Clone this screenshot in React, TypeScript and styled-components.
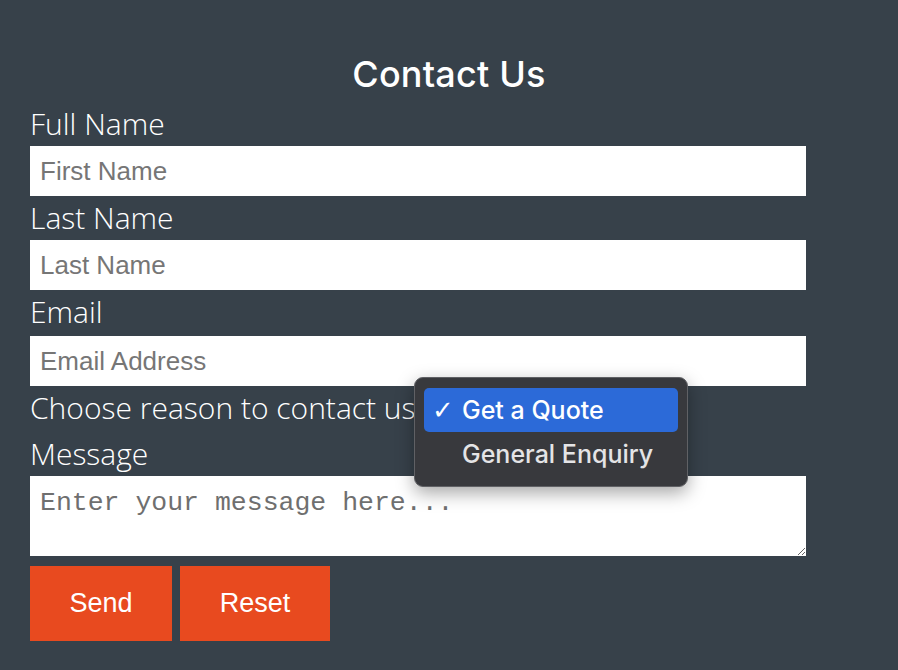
import React from 'react';
import styled, { createGlobalStyle } from 'styled-components';

const GlobalStyle = createGlobalStyle`
  html, body {
    margin: 0;
    padding: 0;
    background: #37414a;
  }
  body {
    width: 898px;
    height: 670px;
    overflow: hidden;
  }
`

const Page = styled.div`
  width: 898px;
  height: 670px;
  box-sizing: border-box;
  padding: 52px 30px 0 30px;
  background: #37414a;
`
const Title = styled.h1`
  margin: 0 0 6px -30px;
  width: 898px;
  text-align: center;
  font-family: Inter, "Noto Sans", sans-serif;
  font-weight: 500;
  font-size: 36px;
  line-height: 44px;
  color: #ffffff;
  letter-spacing: 0.2px;
`
const Form = styled.form`
  width: 776px;
  display: flex;
  flex-direction: column;
`
const Label = styled.label<{ h?: number }>`
  display: block;
  font-family: "Open Sans", sans-serif;
  font-weight: 300;
  font-size: 30px;
  line-height: 44px;
  height: ${(p) => p.h || 44}px;
  color: #ffffff;
  white-space: nowrap;
`
const Field = styled.input`
  display: block;
  width: 100%;
  height: 50px;
  box-sizing: border-box;
  border: none;
  outline: none;
  margin: 0;
  padding: 0 10px;
  background: #ffffff;
  font-family: "Liberation Sans", Arial, sans-serif;
  font-size: 26px;
  color: #222;
  &::placeholder {
    color: #767676;
  }
`
const ReasonRow = styled.div`
  position: relative;
  height: 46px;
`
const Message = styled.textarea`
  display: block;
  width: 100%;
  height: 80px;
  box-sizing: border-box;
  border: none;
  outline: none;
  margin: 0;
  padding: 12px 10px;
  resize: vertical;
  background: #ffffff;
  font-family: "Liberation Mono", "Courier New", monospace;
  font-size: 26.5px;
  color: #222;
  &::placeholder {
    color: #6f6f6f;
  }
`
const Buttons = styled.div`
  display: flex;
  gap: 8px;
  margin-top: 10px;
`
const Button = styled.button<{ w: number }>`
  width: ${(p) => p.w}px;
  height: 75px;
  border: none;
  margin: 0;
  background: #e84a1f;
  color: #ffffff;
  font-family: "Liberation Sans", Arial, sans-serif;
  font-size: 27px;
  cursor: pointer;
`
const Popup = styled.div`
  position: absolute;
  left: 384px;
  top: -9px;
  width: 274px;
  box-sizing: border-box;
  padding: 10px 9px;
  background: #38393d;
  border: 1px solid #606165;
  border-radius: 9px;
  box-shadow: 0 6px 18px rgba(0, 0, 0, 0.35);
  display: flex;
  flex-direction: column;
  z-index: 10;
`
const Option = styled.div<{ selected?: boolean }>`
  height: 44px;
  display: flex;
  align-items: center;
  padding-left: 8px;
  border-radius: 5px;
  background: ${(p) => (p.selected ? '#2c6ad8' : 'transparent')};
  color: ${(p) => (p.selected ? '#ffffff' : '#e4e4e6')};
  font-family: Inter, "Noto Sans", sans-serif;
  font-weight: 500;
  font-size: 25px;
`
const Check = styled.span`
  display: inline-block;
  width: 30px;
  font-size: 26px;
  font-family: "DejaVu Sans", sans-serif;
`

export default function App() {
  return (
    <>
      <GlobalStyle />
      <Page>
        <Title>Contact Us</Title>
        <Form onSubmit={(e) => e.preventDefault()}>
          <Label>Full Name</Label>
          <Field placeholder="First Name" />
          <Label>Last Name</Label>
          <Field placeholder="Last Name" />
          <Label h={46}>Email</Label>
          <Field placeholder="Email Address" />
          <ReasonRow>
            <Label>Choose reason to contact us</Label>
            <Popup>
              <Option selected>
                <Check>✓</Check>Get a Quote
              </Option>
              <Option>
                <Check />General Enquiry
              </Option>
            </Popup>
          </ReasonRow>
          <Label>Message</Label>
          <Message placeholder="Enter your message here..." />
          <Buttons>
            <Button type="submit" w={142}>Send</Button>
            <Button type="reset" w={150}>Reset</Button>
          </Buttons>
        </Form>
      </Page>
    </>
  );
}
